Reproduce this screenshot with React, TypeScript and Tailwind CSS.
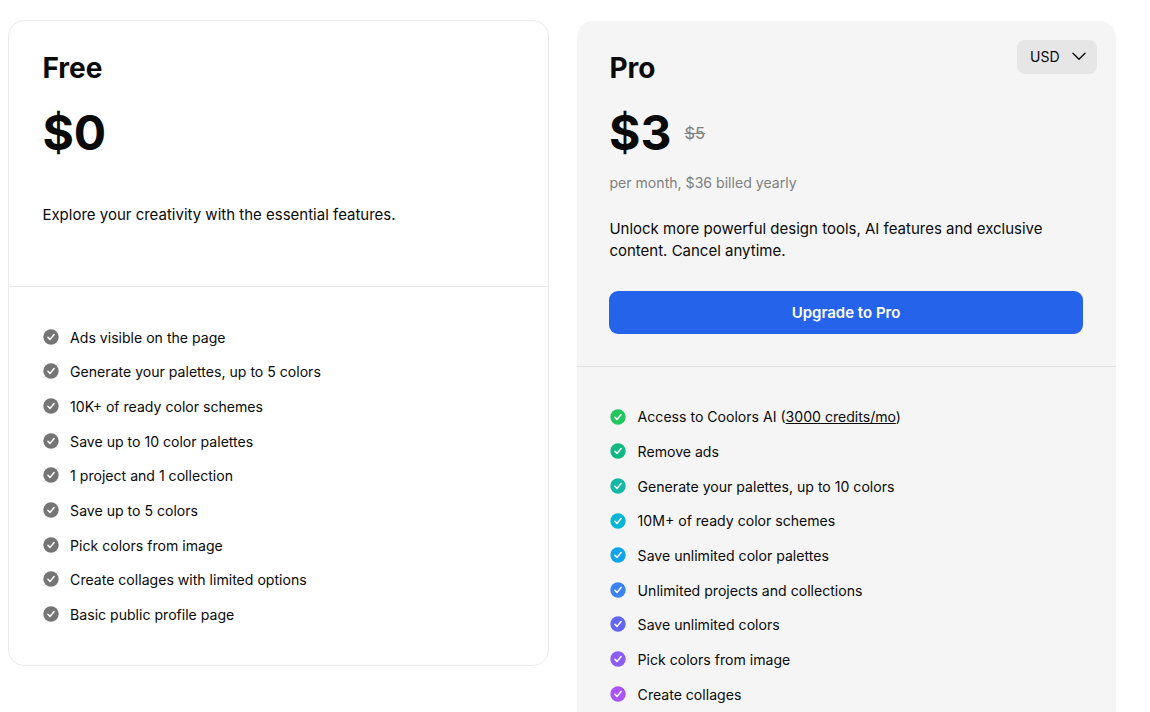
import { clsx } from "clsx"
import type { ReactNode } from "react"

interface Feature {
  label: ReactNode
  color: string
}

const freeFeatures: string[] = [
  "Ads visible on the page",
  "Generate your palettes, up to 5 colors",
  "10K+ of ready color schemes",
  "Save up to 10 color palettes",
  "1 project and 1 collection",
  "Save up to 5 colors",
  "Pick colors from image",
  "Create collages with limited options",
  "Basic public profile page",
]

const proFeatures: Feature[] = [
  {
    label: (
      <>
        Access to Coolors AI (
        <a href="#" className="underline">
          3000 credits/mo
        </a>
        )
      </>
    ),
    color: "text-[#22c55e]",
  },
  { label: "Remove ads", color: "text-[#10b981]" },
  { label: "Generate your palettes, up to 10 colors", color: "text-[#14b8a6]" },
  { label: "10M+ of ready color schemes", color: "text-[#06b6d4]" },
  { label: "Save unlimited color palettes", color: "text-[#0ea5e9]" },
  { label: "Unlimited projects and collections", color: "text-[#3b82f6]" },
  { label: "Save unlimited colors", color: "text-[#6366f1]" },
  { label: "Pick colors from image", color: "text-[#8b5cf6]" },
  { label: "Create collages", color: "text-[#a855f7]" },
]

function CheckIcon({ color }: { color: string }) {
  return (
    <svg viewBox="0 0 16 16" className={clsx("mb-[1.6px] size-4 shrink-0", color)}>
      <circle cx="8" cy="8" r="7.7" fill="currentColor" />
      <path
        d="M4.9 8.3 7 10.4 11.1 5.5"
        fill="none"
        stroke="white"
        strokeWidth="1.5"
        strokeLinecap="round"
        strokeLinejoin="round"
      />
    </svg>
  )
}

function FeatureRow({ label, color }: Feature) {
  return (
    <li className="flex h-[34.66px] items-center gap-[11.6px] text-[14.08px] leading-5">
      <CheckIcon color={color} />
      <span>{label}</span>
    </li>
  )
}

export default function App() {
  return (
    <div className="flex h-[712px] items-start gap-7 overflow-hidden bg-white pt-5 pl-2 font-['Inter',sans-serif] text-[#0a0a0a]">
      <section className="w-[541px] shrink-0 rounded-2xl border border-[#ececec]">
        <div className="h-[266px] border-b border-[#e8e8e8] px-[33.4px] pt-[31px]">
          <h2 className="text-[28px] leading-8 font-bold">Free</h2>
          <p className="mt-[25px] text-5xl font-bold">$0</p>
          <p className="mt-[47px] text-[15px] leading-[22px]">Explore your creativity with the essential features.</p>
        </div>
        <ul className="h-[378px] px-[33.5px] pt-[33.3px]">
          {freeFeatures.map((label) => (
            <FeatureRow key={label} label={label} color="text-[#757575]" />
          ))}
        </ul>
      </section>

      <section className="relative mt-px h-[760px] w-[539px] shrink-0 rounded-2xl bg-[#f5f5f5]">
        <button className="absolute top-[19px] right-[19px] flex h-[34px] w-20 items-center justify-between rounded-lg bg-[#e6e6e6] pr-[10px] pl-[13px] text-sm">
          USD
          <svg viewBox="0 0 16 16" className="mb-[2px] size-4" fill="none" stroke="currentColor" strokeWidth="1.4">
            <path d="m2 5.2 6 6 6-6" strokeLinecap="round" strokeLinejoin="round" />
          </svg>
        </button>
        <div className="h-[346px] border-b border-[#e2e2e2] px-8 pt-[31px]">
          <h2 className="pl-[0.4px] text-[28px] leading-8 font-bold">Pro</h2>
          <div className="mt-[25px] flex items-center gap-[13px]">
            <p className="text-5xl font-bold">$3</p>
            <p className="text-[16.5px] leading-6 text-[#808080] line-through">$5</p>
          </div>
          <p className="mt-4 pl-[0.4px] text-[14.1px] leading-5 text-[#808080]">per month, $36 billed yearly</p>
          <p className="mt-[25px] pl-[0.4px] text-[15px] leading-[22px]">
            Unlock more powerful design tools, AI features and exclusive content. Cancel anytime.
          </p>
          <button className="mt-[29px] h-[43px] w-[474px] rounded-[9px] bg-[#2563eb] pt-px text-[15px] font-semibold text-white">
            Upgrade to Pro
          </button>
        </div>
        <ul className="px-[33px] pt-[33px]">
          {proFeatures.map((feature) => (
            <FeatureRow key={feature.color} {...feature} />
          ))}
        </ul>
      </section>
    </div>
  )
}
